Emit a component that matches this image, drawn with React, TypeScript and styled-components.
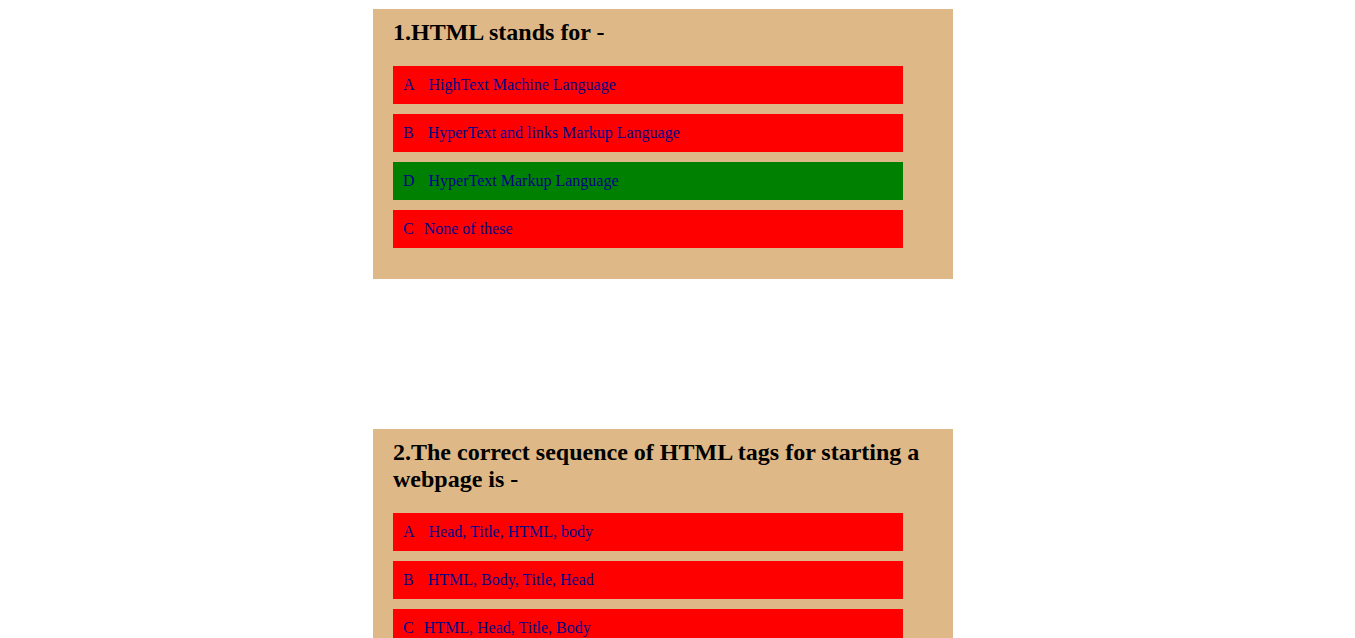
import React from "react";
import styled, { createGlobalStyle } from "styled-components";

const GlobalStyle = createGlobalStyle`
  html, body {
    margin: 0;
    padding: 0;
    background: #ffffff;
  }
  body {
    font-family: "Liberation Serif", "Times New Roman", serif;
  }
  ::-webkit-scrollbar {
    width: 15px;
  }
  ::-webkit-scrollbar-track {
    background: #f9f9f9;
    border-right: 2px solid #ececec;
  }
  ::-webkit-scrollbar-thumb {
    background: #878787;
    border-radius: 8px;
    border-left: 3px solid transparent;
    border-right: 4px solid transparent;
    background-clip: padding-box;
  }
  ::-webkit-scrollbar-button:single-button {
    height: 15px;
    background: #f9f9f9;
    border-right: 2px solid #ececec;
  }
  ::-webkit-scrollbar-button:single-button:vertical:decrement {
    background:
      linear-gradient(to bottom right, transparent 50%, #a3a3a3 50%) 3px 5px / 4px 4px no-repeat,
      linear-gradient(to bottom left, transparent 50%, #a3a3a3 50%) 7px 5px / 4px 4px no-repeat,
      #f9f9f9;
  }
  ::-webkit-scrollbar-button:single-button:vertical:increment {
    background:
      linear-gradient(to top right, transparent 50%, #a3a3a3 50%) 3px 6px / 4px 4px no-repeat,
      linear-gradient(to top left, transparent 50%, #a3a3a3 50%) 7px 6px / 4px 4px no-repeat,
      #f9f9f9;
  }
`;

const Page = styled.main`
  display: flex;
  flex-direction: column;
  align-items: flex-start;
  gap: 150px;
  padding: 9px 0 150px 373px;
`;

const Card = styled.section`
  width: 580px;
  box-sizing: border-box;
  background: #deb887;
  padding: 10px 20px 31px 20px;
`;

const Heading = styled.h2`
  margin: 0 0 20px 0;
  font-size: 24px;
  font-weight: bold;
  line-height: normal;
  color: #000000;
  font-family: "Liberation Serif", "Times New Roman", serif;
`;

const OptionList = styled.div`
  display: flex;
  flex-direction: column;
  gap: 10px;
`;

const Option = styled.div<{ $correct?: boolean }>`
  width: 510px;
  box-sizing: border-box;
  padding: 10px;
  background: ${(p) => (p.$correct ? "#008000" : "#ff0000")};
  color: #00008b;
  font-size: 16px;
  line-height: 18px;
  display: flex;
  align-items: baseline;
  cursor: pointer;
`;

const Letter = styled.span<{ $gap: number }>`
  margin-right: ${(p) => p.$gap}px;
`;

type Opt = { letter: string; text: string; correct?: boolean };
type Question = { title: string; options: Opt[] };

const questions: Question[] = [
  {
    title: "1.HTML stands for -",
    options: [
      { letter: "A", text: "HighText Machine Language" },
      { letter: "B", text: "HyperText and links Markup Language" },
      { letter: "D", text: "HyperText Markup Language", correct: true },
      { letter: "C", text: "None of these" },
    ],
  },
  {
    title: "2.The correct sequence of HTML tags for starting a webpage is -",
    options: [
      { letter: "A", text: "Head, Title, HTML, body" },
      { letter: "B", text: "HTML, Body, Title, Head" },
      { letter: "C", text: "HTML, Head, Title, Body" },
      { letter: "D", text: "HTML, Head, Body, Title" },
    ],
  },
  {
    title: "3.Which of the following element is responsible for making the text bold in HTML?",
    options: [
      { letter: "A", text: "<pre>" },
      { letter: "B", text: "<a>" },
      { letter: "C", text: "<b>" },
      { letter: "D", text: "<br>" },
    ],
  },
  {
    title: "4.Which of the following tag is used for inserting the largest heading in HTML?",
    options: [
      { letter: "A", text: "<h3>" },
      { letter: "B", text: "<h1>" },
      { letter: "C", text: "<h5>" },
      { letter: "D", text: "<h6>" },
    ],
  },
  {
    title: "5.Which of the following tag is used to insert a line-break in HTML?",
    options: [
      { letter: "A", text: "<br>" },
      { letter: "B", text: "<a>" },
      { letter: "C", text: "<pre>" },
      { letter: "D", text: "<b>" },
    ],
  },
];

export default function App() {
  return (
    <>
      <GlobalStyle />
      <Page>
        {questions.map((q) => (
          <Card key={q.title}>
            <Heading>{q.title}</Heading>
            <OptionList>
              {q.options.map((o) => (
                <Option key={o.letter} $correct={o.correct}>
                  <Letter $gap={o.letter === "C" ? 10 : 14}>{o.letter}</Letter>
                  <span>{o.text}</span>
                </Option>
              ))}
            </OptionList>
          </Card>
        ))}
      </Page>
    </>
  );
}
